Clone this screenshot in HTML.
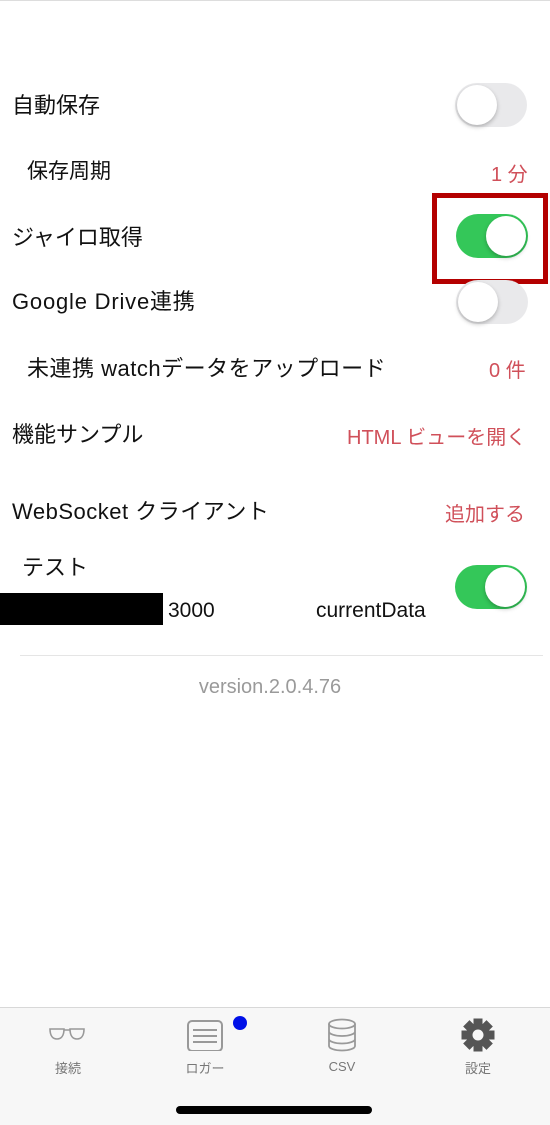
<!DOCTYPE html>
<html><head><meta charset="utf-8"><style>
*{margin:0;padding:0;box-sizing:border-box}
body{width:550px;height:1125px;background:#fff;position:relative;overflow:hidden;font-family:"Liberation Sans","Noto Sans CJK JP",sans-serif;color:#111}
.t{position:absolute;font-size:22px;line-height:26px;white-space:nowrap}
.r{color:#d0505a;font-size:20px}
.sw{position:absolute;width:72px;height:44px;border-radius:22px;background:#e9e9eb}
.sw::after{content:"";position:absolute;top:2px;left:2px;width:40px;height:40px;border-radius:50%;background:#fff;box-shadow:0 2px 4px rgba(0,0,0,.25)}
.sw.on{background:#34c759}
.sw.on::after{left:30px}
.tab{position:absolute;top:1058px;font-size:13px;color:#777;width:80px;text-align:center}
</style></head><body>
<div style="position:absolute;top:0;left:0;width:550px;height:1px;background:#ddd"></div>
<div class="t" style="left:12px;top:93px">自動保存</div>
<div class="sw" style="left:455px;top:83px"></div>
<div class="t" style="left:27px;top:159px;font-size:21px">保存周期</div>
<div class="t r" style="left:491px;top:162px">1 分</div>
<div class="t" style="left:12px;top:225px">ジャイロ取得</div>
<div style="position:absolute;left:432px;top:193px;width:116px;height:91px;border:5px solid #b40000"></div>
<div class="sw on" style="left:456px;top:214px"></div>
<div class="t" style="left:12px;top:289px;letter-spacing:0.8px">Google Drive連携</div>
<div class="sw" style="left:456px;top:280px"></div>
<div class="t" style="left:27px;top:356px;font-size:22px;letter-spacing:0.5px">未連携 watchデータをアップロード</div>
<div class="t r" style="left:489px;top:358px">0 件</div>
<div class="t" style="left:12px;top:422px">機能サンプル</div>
<div class="t r" style="left:347px;top:425px">HTML ビューを開く</div>
<div class="t" style="left:12px;top:499px;letter-spacing:0.5px">WebSocket クライアント</div>
<div class="t r" style="left:445px;top:502px">追加する</div>
<div class="t" style="left:22px;top:555px">テスト</div>
<div style="position:absolute;left:0;top:593px;width:163px;height:32px;background:#000"></div>
<div class="t" style="left:168px;top:598px;font-size:21px">3000</div>
<div class="t" style="left:316px;top:598px;font-size:21px">currentData</div>
<div class="sw on" style="left:455px;top:565px"></div>
<div style="position:absolute;left:20px;top:655px;width:523px;height:1px;background:#e5e5e5"></div>
<div class="t" style="left:0;width:540px;text-align:center;top:674px;font-size:20px;color:#9a9a9a">version.2.0.4.76</div>
<div style="position:absolute;left:0;top:1007px;width:550px;height:118px;background:#f7f7f7;border-top:1px solid #d8d8d8"></div>
<svg style="position:absolute;left:48px;top:1027px" width="38" height="16" viewBox="0 0 38 16"><path d="M2 2h14c0 7-3 10-7 10S2 9 2 2zM22 2h14c0 7-3 10-7 10s-7-3-7-10zM16 3h6" fill="none" stroke="#999" stroke-width="1.6"/></svg>
<div class="tab" style="left:28px">接続</div>
<svg style="position:absolute;left:186px;top:1019px" width="38" height="32" viewBox="0 0 38 32"><rect x="2" y="2" width="34" height="30" rx="4" fill="none" stroke="#999" stroke-width="2"/><path d="M7 11h24M7 17h24M7 23h24" stroke="#999" stroke-width="2"/></svg>
<div style="position:absolute;left:233px;top:1016px;width:14px;height:14px;border-radius:50%;background:#0010e8"></div>
<div class="tab" style="left:165px">ロガー</div>
<svg style="position:absolute;left:326px;top:1018px" width="32" height="34" viewBox="0 0 32 34"><ellipse cx="16" cy="6" rx="13" ry="4.5" fill="none" stroke="#999" stroke-width="1.8"/><path d="M3 6v22c0 2.5 6 4.5 13 4.5S29 30.5 29 28V6M3 13.5c0 2.5 6 4.5 13 4.5s13-2 13-4.5M3 21c0 2.5 6 4.5 13 4.5s13-2 13-4.5" fill="none" stroke="#999" stroke-width="1.8"/></svg>
<div class="tab" style="left:302px;top:1059px">CSV</div>
<svg style="position:absolute;left:461px;top:1018px" width="34" height="34" viewBox="-17 -17 34 34"><g fill="#555"><circle r="12"/><rect x="-4.5" y="-16.5" width="9" height="33"/><rect x="-4.5" y="-16.5" width="9" height="33" transform="rotate(45)"/><rect x="-4.5" y="-16.5" width="9" height="33" transform="rotate(90)"/><rect x="-4.5" y="-16.5" width="9" height="33" transform="rotate(135)"/></g><circle r="5.5" fill="#f7f7f7"/></svg>
<div class="tab" style="left:438px">設定</div>
<div style="position:absolute;left:176px;top:1106px;width:196px;height:8px;border-radius:4px;background:#000"></div>
</body></html>
